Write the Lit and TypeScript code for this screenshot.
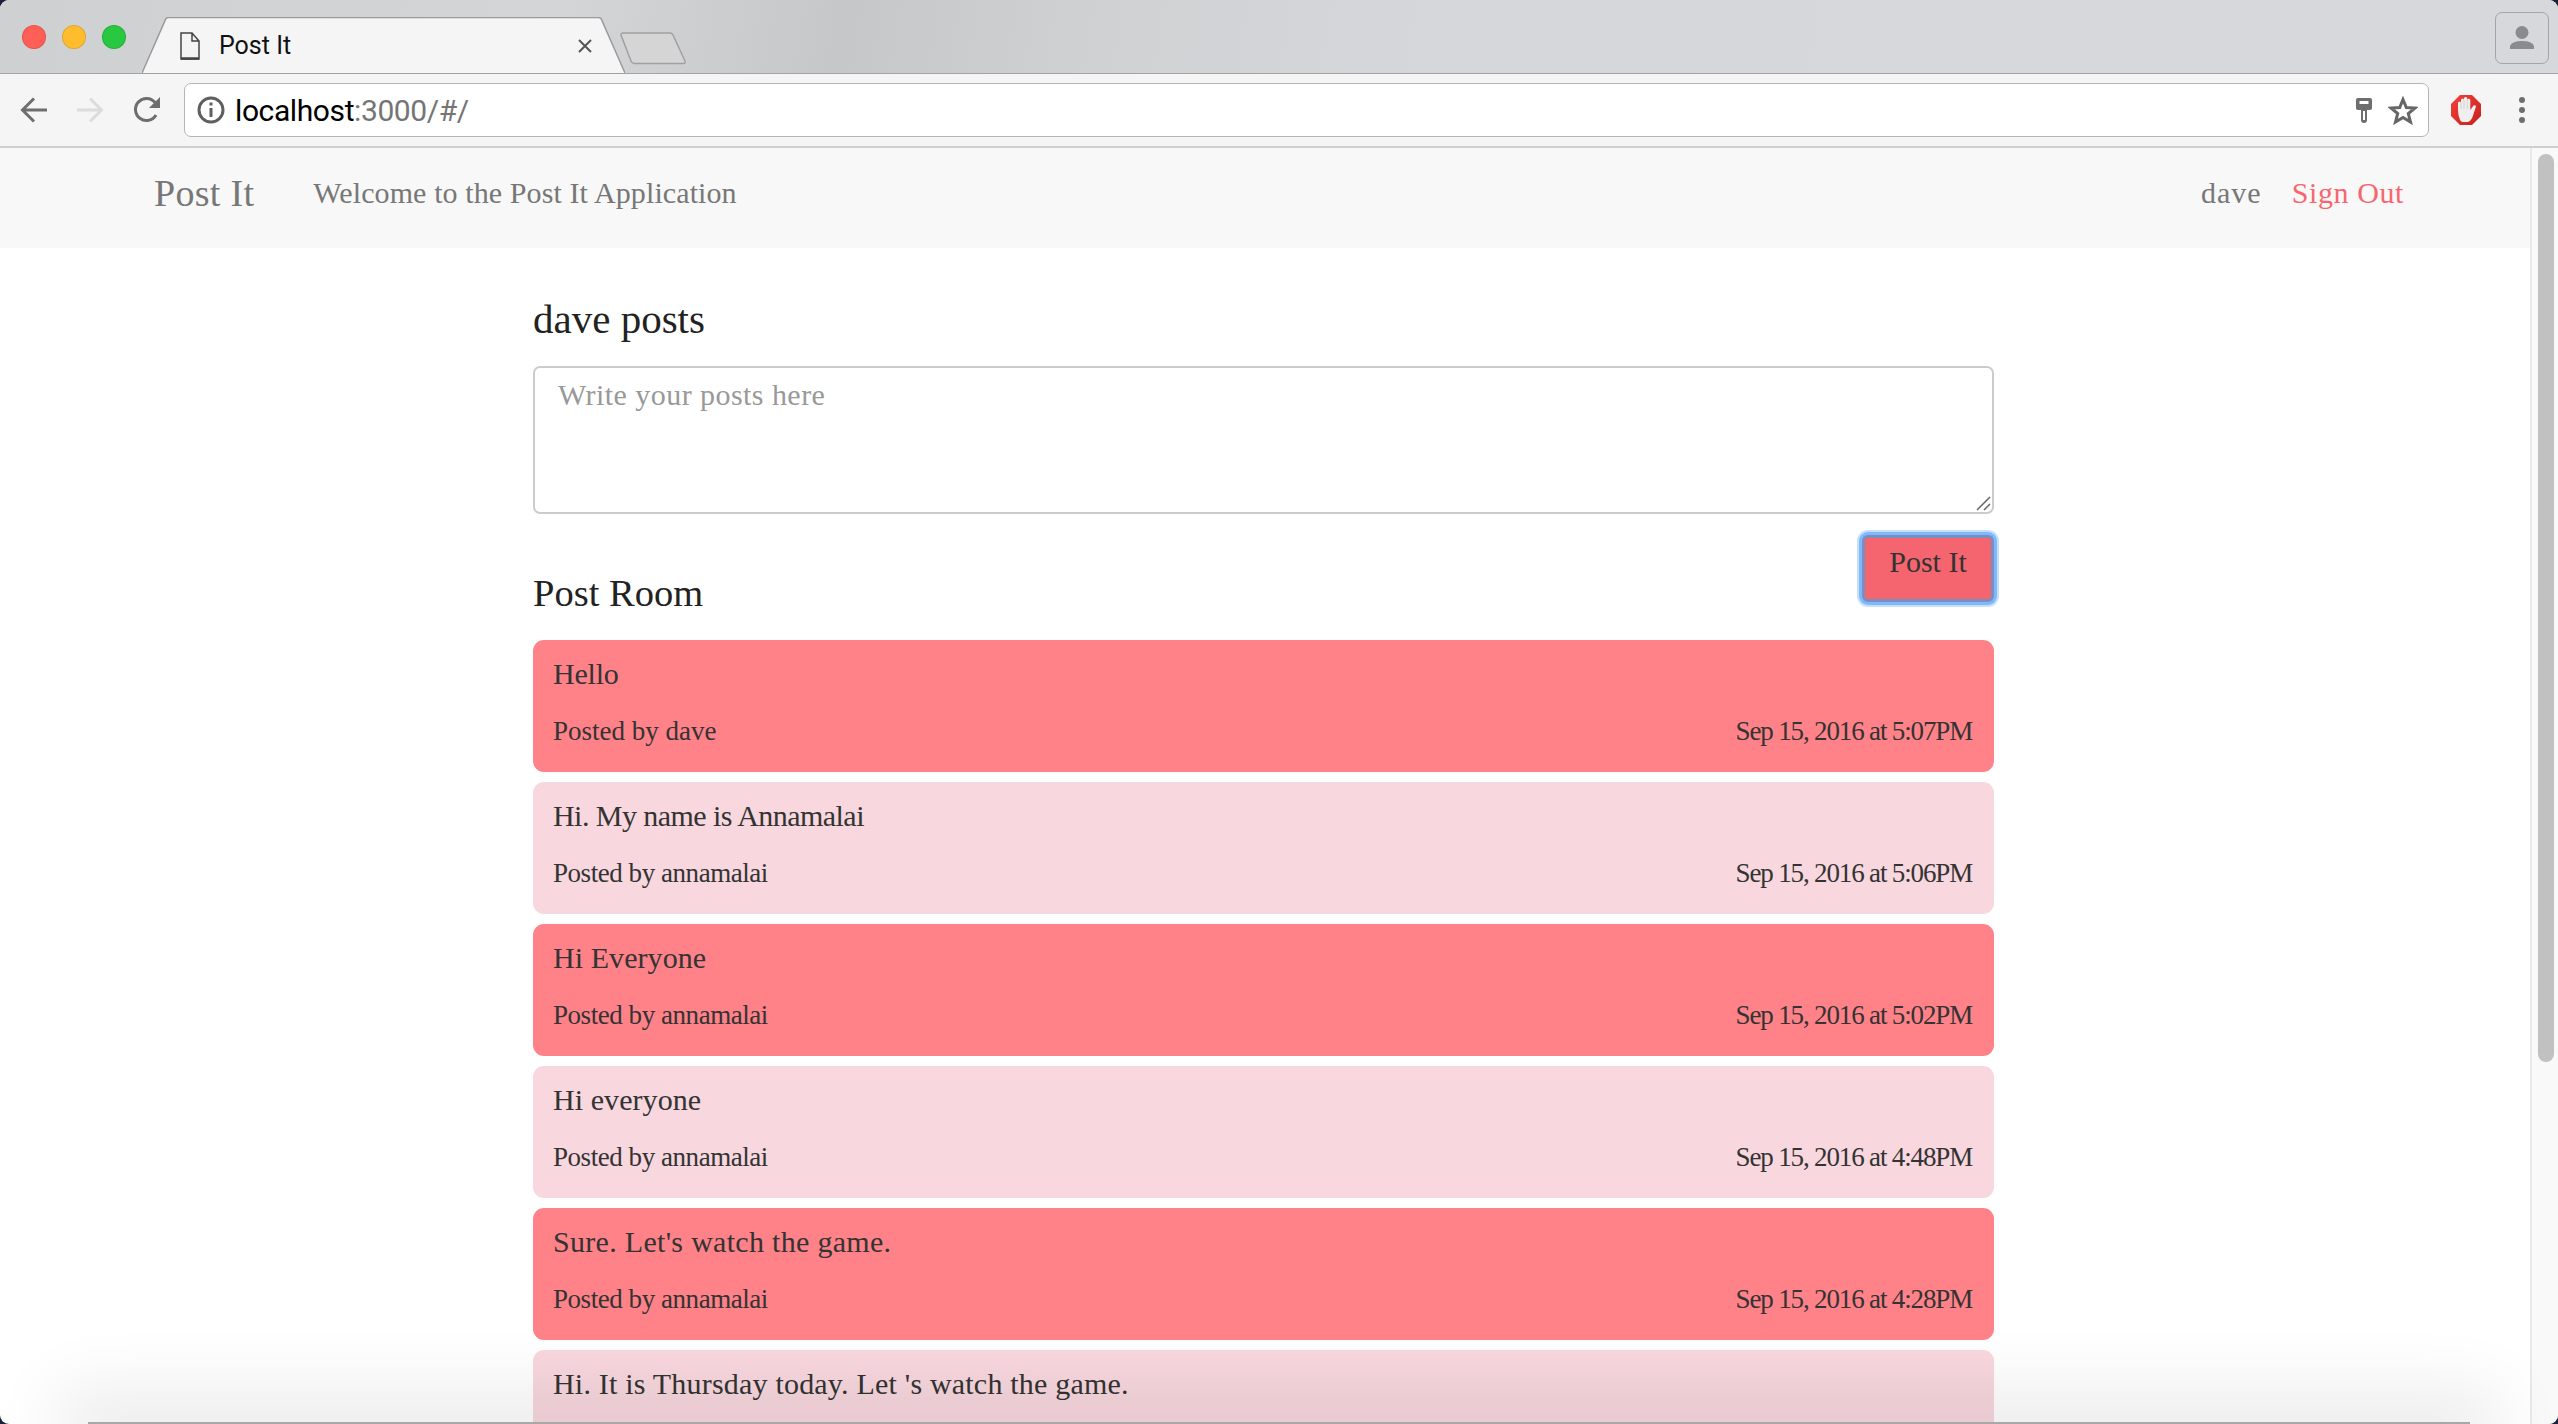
import { LitElement, html, css } from "lit";
import { customElement } from "lit/decorators.js";

const posts = [
  { text: "Hello", by: "dave", at: "Sep 15, 2016 at 5:07PM", ls: -0.2, mls: 0 },
  { text: "Hi. My name is Annamalai", by: "annamalai", at: "Sep 15, 2016 at 5:06PM", ls: -0.55, mls: -0.45 },
  { text: "Hi Everyone", by: "annamalai", at: "Sep 15, 2016 at 5:02PM", ls: 0.07, mls: -0.45 },
  { text: "Hi everyone", by: "annamalai", at: "Sep 15, 2016 at 4:48PM", ls: 0.07, mls: -0.45 },
  { text: "Sure. Let's watch the game.", by: "annamalai", at: "Sep 15, 2016 at 4:28PM", ls: 0.3, mls: -0.45 },
  { text: "Hi. It is Thursday today. Let 's watch the game.", by: "annamalai", at: "Sep 15, 2016 at 4:20PM", ls: 0.2, mls: -0.45 },
];

@customElement("app-root")
export class AppRoot extends LitElement {
  static styles = css`
    :host { display: block; height: 1424px; width: 2558px; overflow: hidden; background: #1b2238; position: relative; font-family: "Liberation Serif", serif; }
    .window { height: 1424px; display: flex; flex-direction: column; border-radius: 9px; overflow: hidden; background: #fff; }
    .strip { height: 74px; flex: none; display: flex; align-items: flex-start; position: relative; box-sizing: border-box;
      background: linear-gradient(100deg, #ced0d2 0%, #d4d5d7 22%, #c6c7c9 33%, #d0d1d3 43%, #d6d7da 56%, #d7d8db 100%); border-bottom: 1px solid #a3a3a5; }
    .lights { display: flex; gap: 16px; margin: 25px 0 0 22px; }
    .light { width: 24px; height: 24px; border-radius: 50%; box-sizing: border-box; border: 1px solid rgba(0,0,0,.12); }
    .tab { position: relative; width: 483px; height: 57px; margin: 17px 0 0 16px; flex: none; display: flex; align-items: center; }
    .tab-bg { position: absolute; left: 0; top: 0; }
    .fileicon { position: relative; margin-left: 38px; }
    .title { position: relative; margin-left: 19px; font: 25px "Roboto", sans-serif; color: #111; width: 358px; }
    .close { position: relative; }
    .newtab { margin: 32px 0 0 -5px; position: relative; }
    .profile { position: absolute; left: 2495px; top: 12px; width: 54px; height: 52px; box-sizing: border-box; border: 1px solid #a4a5a8; border-radius: 7px; display: flex; align-items: center; justify-content: center; }
    .toolbar { height: 74px; flex: none; box-sizing: border-box; background: #f5f5f5; border-bottom: 2px solid #cfcfcf; display: flex; align-items: center; padding-left: 20px; }
    .tb { flex: none; display: block; }
    .omni { margin-left: 23px; width: 2245px; height: 54px; box-sizing: border-box; background: #fff; border: 1px solid #b5b5b5; border-radius: 7px; display: flex; align-items: center; padding: 0 10px 0 12px; flex: none; }
    .url { font: 30px "Roboto", sans-serif; margin-left: 10px; color: #000; flex: 1; letter-spacing: -.4px; }
    .url span { color: #757575; }
    .page { flex: 1; display: flex; min-height: 0; }
    .main { flex: 1; min-width: 0; }
    .track { width: 28px; flex: none; background: #f9f9f9; border-left: 2px solid #e9e9e9; box-sizing: border-box; padding: 6px 0 0 6px; }
    .thumb { width: 16px; height: 908px; border-radius: 8px; background: #c1c1c1; }
    nav { height: 100px; background: #f8f8f8; display: flex; align-items: center; box-sizing: border-box; padding: 0 126px 10px 154px; color: #777; }
    .brand { font-size: 38px; letter-spacing: .3px; margin-right: 59px; }
    .welcome { font-size: 30px; flex: 1; letter-spacing: .1px; }
    .user { font-size: 30px; margin-right: 30px; letter-spacing: 1px; }
    .signout { font-size: 30px; color: #f7666f; letter-spacing: .6px; }
    .content { width: 1461px; margin-left: 533px; padding-top: 44px; color: #333; }
    h1 { font-size: 41px; font-weight: 400; margin: 0; line-height: 54px; height: 74px; color: #222; }
    .ta { height: 148px; box-sizing: border-box; border: 2px solid #ccc; border-radius: 7px; padding: 10px 23px; font-size: 30px; color: #999; position: relative; letter-spacing: .45px; }
    .grip { position: absolute; right: 1px; bottom: 1px; }
    .row { display: flex; justify-content: space-between; align-items: flex-start; height: 126px; position: relative; }
    h2 { font-size: 38.5px; font-weight: 400; margin: 55px 0 0; line-height: 48px; color: #222; }
    .btn { margin-top: 21px; width: 132px; height: 67px; box-sizing: border-box; background: #f5656f; border: 3px solid #7a8fc0; border-radius: 6px; box-shadow: 0 0 0 3px #7fb8fb, 0 0 0 5px #c6e0fb; font-size: 30px; color: #333; display: flex; justify-content: center; padding-top: 7px; }
    .card { height: 132px; box-sizing: border-box; border-radius: 11px; margin-bottom: 10px; padding: 14px 22px 0 20px; font-size: 30px; color: #333; }
    .card.a { background: #ff8289; }
    .card.b { background: #f8d7de; }
    .msg { line-height: 40px; height: 59px; }
    .meta { display: flex; justify-content: space-between; font-size: 27px; line-height: 36px; }
    .date { letter-spacing: -1.15px; }
    .shade { position: absolute; left: 88px; right: 88px; bottom: -1px; height: 3px; background: #a8a8a8; box-shadow: 0 0 70px 30px rgba(0,0,0,.09); pointer-events: none; }
  `;

  render() {
    return html`<div class="window">
      <div class="strip">
        <div class="lights">
          <div class="light" style="background:#ff5f57"></div>
          <div class="light" style="background:#ffbd2e"></div>
          <div class="light" style="background:#28c840"></div>
        </div>
        <div class="tab">
          <svg class="tab-bg" width="483" height="57" viewBox="0 0 483 57">
            <path d="M0 56 L24 1.5 Q25 .5 27 .5 L456 .5 Q458 .5 459 1.5 L483 56" fill="#f5f5f5" stroke="#9a9a9c" stroke-width="1.5"/>
          </svg>
          <svg class="fileicon" width="20" height="28" viewBox="0 0 20 28" fill="none" stroke="#444" stroke-width="1.5">
            <path d="M1 1 H12 L19 9 V27 H1 Z M12 1 V9 H19"/><path d="M1 26.5 H19" stroke-width="2.5"/>
          </svg>
          <div class="title">Post It</div>
          <svg class="close" width="16" height="16" viewBox="0 0 16 16" stroke="#555" stroke-width="2"><path d="M2 2 L14 14 M14 2 L2 14"/></svg>
        </div>
        <svg class="newtab" width="66" height="33" viewBox="0 0 66 33" fill="#d5d5d6" stroke="#a0a0a2" stroke-width="1.5">
          <path d="M1 3 Q1 1 3 1 H50 Q52 1 53 3 L65 29 Q66 31.500 63 31.500 H14 Q12 31.500 11 29 Z"/>
        </svg>
        <div class="profile">
          <svg width="26" height="26" viewBox="0 0 26 26" fill="#8a8b8e"><circle cx="13" cy="7.500" r="6.500"/><path d="M1 24 V21 Q3 16 13 16 Q23 16 25 21 V24 Z"/></svg>
        </div>
      </div>
      <div class="toolbar">
        <svg class="tb" width="27" height="26" viewBox="0 0 27 26" fill="none" stroke="#6e6e6e" stroke-width="3"><path d="M27 13 H3 M14 1.500 L2.500 13 L14 24.500"/></svg>
        <svg class="tb" style="margin-left:30px" width="27" height="26" viewBox="0 0 27 26" fill="none" stroke="#dcdcdc" stroke-width="3"><path d="M0 13 H24 M13 1.500 L24.500 13 L13 24.500"/></svg>
        <svg class="tb" style="margin-left:29px" width="28" height="28" viewBox="0 0 28 28" fill="none" stroke="#6e6e6e" stroke-width="3"><path d="M23 19 A11 11 0 1 1 22 6.500"/><path d="M27 1 V12 H16 Z" fill="#6e6e6e" stroke="none"/></svg>
        <div class="omni">
          <svg width="28" height="28" viewBox="0 0 28 28" fill="none" stroke="#5f5f5f" stroke-width="3"><circle cx="14" cy="14" r="12"/><path d="M14 12 V21 M14 6.500 V9.500"/></svg>
          <div class="url">localhost<span>:3000/#/</span></div>
          <svg width="16" height="25" viewBox="0 0 16 25"><path fill="#6e6e6e" d="M2 0 H14 Q16 0 16 2 V10 Q16 12 14 12 H11 V22 Q11 25 8 25 Q5 25 5 22 V12 H2 Q0 12 0 10 V2 Q0 0 2 0 Z"/><rect x="3.500" y="3" width="9" height="3" fill="#fff"/><rect x="7" y="13" width="2" height="9" fill="#fff"/></svg>
          <svg style="margin-left:16px" width="30" height="29" viewBox="0 0 30 29" fill="none" stroke="#666" stroke-width="3"><path d="M15 3.500 L18.300 11.500 L27 12 L20.300 17.600 L22.500 26 L15 21.400 L7.500 26 L9.700 17.600 L3 12 L11.700 11.500 Z"/></svg>
        </div>
        <svg class="tb" style="margin-left:22px" width="30" height="30" viewBox="0 0 30 30">
          <defs><linearGradient id="abp" x1="0" y1="0" x2="1" y2="1"><stop offset="0" stop-color="#f2413a"/><stop offset="1" stop-color="#c8201c"/></linearGradient></defs>
          <path d="M9 0 H21 L30 9 V21 L21 30 H9 L0 21 V9 Z" fill="url(#abp)"/>
          <path d="M9 25 Q7 20 7 15 V8 Q7 6.500 8.500 6.500 Q10 6.500 10 8 V5 Q10 3.500 11.500 3.500 Q13 3.500 13 5 V3.500 Q13 2 14.700 2 Q16.300 2 16.300 3.500 V5 Q16.300 3.700 17.800 3.700 Q19.300 3.700 19.300 5 V15 L22.500 10.500 Q24.500 9.500 25 11.500 L21.500 22 Q20 26 17 27 H12 Q10 27 9 25 Z" fill="#efefef"/>
          <path d="M10 8 V14 M13 5 V14 M16.300 5 V14" stroke="#c9c9c9" stroke-width=".8" fill="none"/>
        </svg>
        <svg class="tb" style="margin-left:37px" width="8" height="28" viewBox="0 0 8 28" fill="#6e6e6e"><circle cx="4" cy="4" r="3"/><circle cx="4" cy="14" r="3"/><circle cx="4" cy="24" r="3"/></svg>
      </div>
      <div class="page">
        <div class="main">
          <nav>
            <div class="brand">Post It</div>
            <div class="welcome">Welcome to the Post It Application</div>
            <div class="user">dave</div>
            <div class="signout">Sign Out</div>
          </nav>
          <div class="content">
            <h1>dave posts</h1>
            <div class="ta">Write your posts here
              <svg class="grip" width="16" height="16" viewBox="0 0 16 16" stroke="#666" stroke-width="1.500"><path d="M2 15 L15 2 M9 15 L15 9"/></svg>
            </div>
            <div class="row">
              <h2>Post Room</h2>
              <div class="btn">Post It</div>
            </div>
            ${posts.map((p, i) => html`<div class="card ${i % 2 ? "b" : "a"}">
              <div class="msg" style="letter-spacing:${p.ls}px">${p.text}</div>
              <div class="meta"><span style="letter-spacing:${p.mls}px">Posted by ${p.by}</span><span class="date">${p.at}</span></div>
            </div>`)}
          </div>
        </div>
        <div class="track"><div class="thumb"></div></div>
      </div>
    </div>
    <div class="shade"></div>`;
  }
}
